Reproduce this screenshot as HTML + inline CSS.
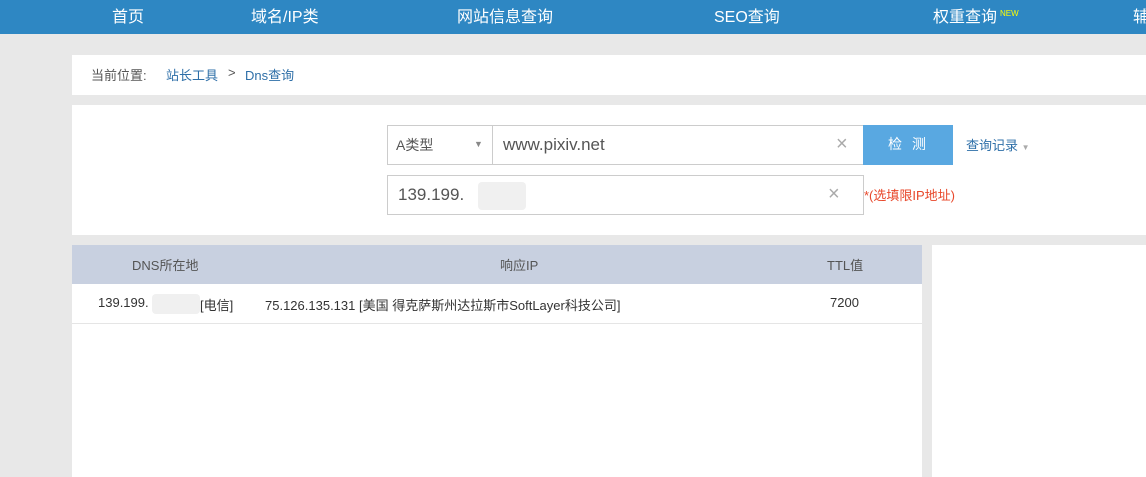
<!DOCTYPE html><html><head><meta charset="utf-8"><style>
*{margin:0;padding:0;box-sizing:border-box}
body{width:1146px;height:477px;overflow:hidden;background:#e8e8e8;font-family:"Liberation Sans","Noto Sans CJK SC",sans-serif;position:relative;font-size:13px;color:#333}
.a{position:absolute;white-space:nowrap}
.nav{left:0;top:0;width:1146px;height:34px;background:#2e87c3;color:#fff;font-size:16px}
.nav span{position:absolute;top:3px;white-space:nowrap}
.panel{background:#fff}
.box{border:1px solid #ccc;background:#fff}
</style></head><body>
<div class="a nav">
<span style="left:112px">首页</span>
<span style="left:251px">域名/IP类</span>
<span style="left:457px">网站信息查询</span>
<span style="left:714px">SEO查询</span>
<span style="left:933px">权重查询<sup style="color:#ff0;font-size:8px;margin-left:3px">NEW</sup></span>
<span style="left:1133px">辅</span>
</div>
<div class="a panel" style="left:72px;top:55px;width:1074px;height:40px;color:#555">
<span class="a" style="left:19px;top:10px">当前位置:</span>
<span class="a" style="left:94px;top:10px;color:#2e6fa8">站长工具</span>
<span class="a" style="left:156px;top:10px">&gt;</span>
<span class="a" style="left:173px;top:10px;color:#2e6fa8">Dns查询</span>
</div>
<div class="a panel" style="left:72px;top:105px;width:1074px;height:130px"></div>
<div class="a box" style="left:387px;top:125px;width:106px;height:40px;color:#555;font-size:14px"><span class="a" style="left:8px;top:9px">A类型</span><span class="a" style="left:86px;top:13px;font-size:9px;color:#888">▼</span></div>
<div class="a box" style="left:492px;top:125px;width:372px;height:40px;font-size:17px;color:#555"><span class="a" style="left:10px;top:9px">www.pixiv.net</span><span class="a" style="left:343px;top:7px;color:#aaa;font-size:20px">×</span></div>
<div class="a" style="left:863px;top:125px;width:90px;height:40px;background:#59a8e1;color:#fff;font-size:14px;text-align:center;line-height:38px;letter-spacing:10px;padding-left:8px">检测</div>
<span class="a" style="left:966px;top:135px;color:#2e6fa8">查询记录 <span style="color:#aaa;font-size:8px">▼</span></span>
<div class="a box" style="left:387px;top:175px;width:477px;height:40px;font-size:17px;color:#555"><span class="a" style="left:10px;top:9px">139.199.</span><span class="a" style="left:90px;top:6px;width:48px;height:28px;background:#f0f0f0;border-radius:4px"></span><span class="a" style="left:440px;top:7px;color:#aaa;font-size:20px">×</span></div>
<span class="a" style="left:864px;top:185px;color:#e8472a">*(选填限IP地址)</span>
<div class="a" style="left:72px;top:245px;width:850px;height:232px;background:#fff"></div>
<div class="a" style="left:72px;top:245px;width:850px;height:39px;background:#c8d0e0;color:#555">
<span class="a" style="left:60px;top:10px">DNS所在地</span>
<span class="a" style="left:428px;top:10px">响应IP</span>
<span class="a" style="left:755px;top:10px">TTL值</span>
</div>
<div class="a" style="left:72px;top:284px;width:850px;height:40px;border-bottom:1px solid #e5e5e5;color:#333">
<span class="a" style="left:26px;top:11px">139.199.</span>
<span class="a" style="left:80px;top:10px;width:48px;height:20px;background:#f0f0f0;border-radius:4px"></span>
<span class="a" style="left:128px;top:11px">[电信]</span>
<span class="a" style="left:193px;top:11px">75.126.135.131 [美国 得克萨斯州达拉斯市SoftLayer科技公司]</span>
<span class="a" style="left:758px;top:11px">7200</span>
</div>
<div class="a" style="left:932px;top:245px;width:214px;height:232px;background:#fff"></div>
</body></html>
